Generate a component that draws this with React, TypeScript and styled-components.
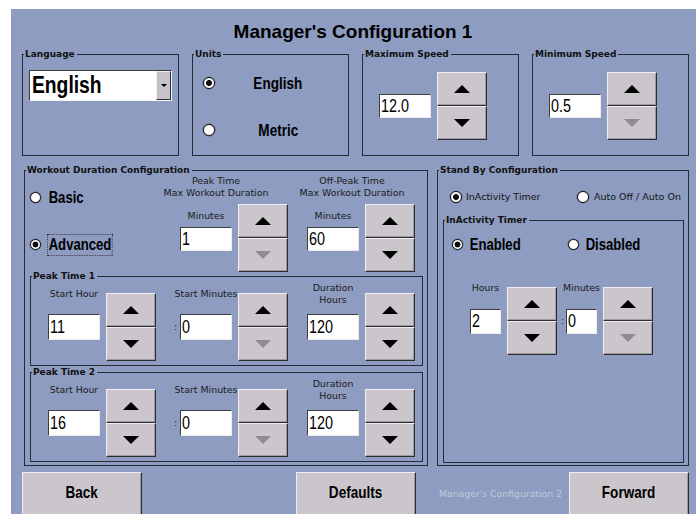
import React from "react";
import styled, { createGlobalStyle } from "styled-components";

const SANS = `"Liberation Sans", Arial, sans-serif`;
const SMALL = `"DejaVu Sans", Verdana, sans-serif`;

const GlobalStyle = createGlobalStyle`
  html, body {
    margin: 0;
    padding: 0;
    background: #fff;
    overflow: hidden;
  }
  * {
    box-sizing: border-box;
  }
`;

// the panel's big texts are a tall, narrow face: Arial squeezed sideways
const Narrow = styled.span<{ $origin?: string }>`
  display: inline-block;
  white-space: nowrap;
  transform: scaleX(0.82);
  transform-origin: ${(p) => p.$origin ?? "left"} center;
`;

const Screen = styled.div`
  width: 696px;
  height: 514px;
  padding: 9px 0 0 11px;
`;

const Panel = styled.main`
  height: 505px;
  background: #8d9cc0;
  padding: 0 7px 0 11px;
  display: flex;
  flex-direction: column;
  overflow: hidden;
  color: #000;
`;

const Title = styled.h1`
  margin: 0 0 5px;
  padding: 12px 5px 0 0;
  font: bold 19px/22px ${SANS};
  text-align: center;
`;

const TopRow = styled.div`
  flex: none;
  display: grid;
  grid-template-columns: repeat(4, 157px);
  column-gap: 13px;
  height: 108px;
`;

const MainRow = styled.div`
  flex: none;
  display: grid;
  grid-template-columns: 404px 252px;
  column-gap: 9px;
  height: 302px;
  margin-top: 8px;
  padding-left: 2px;
`;

const Box = styled.fieldset<{ $fill?: boolean }>`
  margin: 0;
  padding: 0;
  min-width: 0;
  border: 1px solid #252a35;
  display: flex;
  flex-direction: column;
  ${(p) => (p.$fill ? "flex: 1;" : "")}
`;

const Legend = styled.legend`
  margin-left: 1px;
  padding: 0 2px 0 1px;
  font: bold 9px/13px ${SMALL};
  white-space: nowrap;
  color: #111;
`;

/* language */
const LanguageBody = styled.div`
  padding: 9px 0 0 6px;
`;

const Select = styled.div`
  display: flex;
  width: 143px;
  height: 31px;
  background: #fff;
  border: 1px solid;
  border-color: #3a3a3a #f4f4f4 #f4f4f4 #3a3a3a;
`;

const SelectText = styled.span`
  flex: 1;
  padding-left: 2px;
  font: bold 23.5px/29px ${SANS};
`;

const DropButton = styled.span`
  width: 15px;
  display: flex;
  align-items: center;
  justify-content: center;
  background: #c6c2c7;
  border: 1px solid;
  border-color: #f0edf1 #2e2e2e #2e2e2e #f0edf1;
`;

const DropArrow = styled.span`
  width: 0;
  height: 0;
  border-left: 3px solid transparent;
  border-right: 3px solid transparent;
  border-top: 3px solid #000;
`;

/* radios */
const Radio = styled.span<{ $on?: boolean; $size: number }>`
  flex: none;
  display: inline-block;
  width: ${(p) => p.$size}px;
  height: ${(p) => p.$size}px;
  border-radius: 50%;
  border: 1px solid #111;
  background: ${(p) =>
    p.$on ? "radial-gradient(circle, #0a0a0a 2.6px, #fff 3.3px)" : "#fff"};
  box-shadow: 0 0 0 0.5px rgba(40, 40, 40, 0.5);
`;

const Option = styled.div<{ $gap: number }>`
  display: flex;
  align-items: center;
  gap: ${(p) => p.$gap}px;
  height: 21px;
  white-space: nowrap;
`;

const BigLabel = styled.span<{ $focus?: boolean }>`
  display: inline-block;
  height: 22px;
  padding: 0 1px;
  border: 1px dotted ${(p) => (p.$focus ? "#333" : "transparent")};
  font: bold 16px/20px ${SANS};
  transform: scaleX(0.82);
  transform-origin: left center;
`;

const SmallLabel = styled.span`
  font: 9.5px/12px ${SMALL};
  color: #151515;
`;

/* units */
const UnitsBody = styled.div`
  display: grid;
  grid-template-columns: 12px 1fr;
  grid-auto-rows: 24px;
  row-gap: 23px;
  align-items: center;
  padding: 10px 7px 0 10px;
`;

const UnitLabel = styled.span`
  text-align: center;
  font: bold 16.5px/24px ${SANS};
`;

/* spin controls */
const SpeedBody = styled.div`
  padding: 11px 0 0 16px;
`;

const SpinGroup = styled.div<{ $w: number }>`
  display: grid;
  grid-template-columns: ${(p) => p.$w}px 50px;
  grid-template-rows: 1fr auto 1fr;
  column-gap: 6px;
  height: 68px;
`;

const Caption = styled.div<{ $top: number }>`
  grid-column: 1;
  grid-row: 1;
  align-self: start;
  margin-top: ${(p) => p.$top}px;
  height: 22px;
  display: flex;
  align-items: center;
  justify-content: center;
  text-align: center;
  white-space: nowrap;
  font: 9.4px/12px ${SMALL};
  color: #1b1b1b;
`;

const Field = styled.div<{ $w: number; $h: number }>`
  grid-column: 1;
  grid-row: 2;
  width: ${(p) => p.$w}px;
  height: ${(p) => p.$h}px;
  background: #fff;
  border: 1px solid;
  border-color: #3e3e3e #ececec #ececec #3e3e3e;
  padding-left: 1px;
  font: 17.5px/${(p) => p.$h - 2}px ${SANS};
  overflow: hidden;
`;

const SpinStack = styled.div`
  grid-column: 2;
  grid-row: 1 / 4;
  display: grid;
  grid-template-rows: 1fr 1fr;
`;

const SpinButton = styled.div`
  display: flex;
  align-items: center;
  justify-content: center;
  background: #cac6cb;
  border: 1px solid;
  border-color: #f2eff3 #2c2c2c #2c2c2c #f2eff3;
  box-shadow: inset -1px -1px 0 #9d9aa0;
`;

const Arrow = styled.span<{ $dir: "up" | "down"; $off?: boolean }>`
  width: 0;
  height: 0;
  border-left: 8px solid transparent;
  border-right: 8px solid transparent;
  ${(p) =>
    p.$dir === "up"
      ? `border-bottom: 8px solid ${p.$off ? "#8e8c90" : "#000"};`
      : `border-top: 8px solid ${p.$off ? "#8e8c90" : "#000"};`}
`;

interface SpinProps {
  value: string;
  label?: React.ReactNode;
  w?: number;
  h?: number;
  top?: number;
  downOff?: boolean;
}

const Spin = ({ value, label, w = 52, h = 26, top = -10, downOff }: SpinProps) => (
  <SpinGroup $w={w}>
    {label && <Caption $top={top}>{label}</Caption>}
    <Field $w={w} $h={h}>
      <Narrow>{value}</Narrow>
    </Field>
    <SpinStack>
      <SpinButton>
        <Arrow $dir="up" />
      </SpinButton>
      <SpinButton>
        <Arrow $dir="down" $off={downOff} />
      </SpinButton>
    </SpinStack>
  </SpinGroup>
);

/* workout */
const WorkoutBody = styled.div`
  flex: 1;
  display: flex;
  flex-direction: column;
  padding: 0 4px 2px 5px;
`;

const TopArea = styled.div`
  flex: none;
  height: 93px;
  display: grid;
  grid-template-columns: 150px 108px 19px 108px;
  grid-template-rows: 22px 68px;
  row-gap: 5px;
`;

const ModeColumn = styled.div`
  grid-column: 1;
  grid-row: 1 / 3;
  display: flex;
  flex-direction: column;
  gap: 26px;
  padding-top: 10px;
`;

const Header = styled.div<{ $col: number; $shift: number }>`
  grid-column: ${(p) => p.$col};
  grid-row: 1;
  margin: -2px 0 0 ${(p) => p.$shift * 2}px;
  text-align: center;
  white-space: nowrap;
  font: 9.4px/12px ${SMALL};
  color: #1b1b1b;
`;

const Cell = styled.div<{ $col: number }>`
  grid-column: ${(p) => p.$col};
  grid-row: 2;
`;

const PeakBody = styled.div`
  display: grid;
  grid-template-columns: 108px 24px 108px 19px 108px;
  padding: 10px 0 4px 17px;
`;

const Colon = styled.span<{ $pad: number; $w?: number }>`
  display: flex;
  align-items: center;
  justify-content: flex-end;
  ${(p) => (p.$w ? `width: ${p.$w}px;` : "")}
  padding-right: ${(p) => p.$pad}px;
  font: 9px ${SMALL};
  color: #222;
`;

/* standby */
const StandbyBody = styled.div`
  flex: 1;
  display: flex;
  flex-direction: column;
  padding: 9px 4px 2px 5px;
`;

const ChoiceRow = styled.div<{ $col: number; $pad: number }>`
  display: grid;
  grid-template-columns: ${(p) => p.$col}px auto;
  padding-left: ${(p) => p.$pad}px;
  height: 20px;
  align-items: center;
`;

const InnerBox = styled(Box)`
  margin-top: 8px;
`;

const TimerBody = styled.div`
  padding: 7px 0 0 0;
`;

const TimerSpins = styled.div`
  display: flex;
  margin-top: 33px;
  padding-left: 26px;
`;

/* bottom bar */
const BottomBar = styled.div`
  flex: none;
  display: flex;
  align-items: flex-start;
  margin-top: 6px;
`;

const Button = styled.button<{ $push?: boolean }>`
  width: 120px;
  height: 44px;
  padding: 0 0 4px;
  margin-left: ${(p) => (p.$push ? "auto" : "0")};
  background: #cac6cb;
  border: 1px solid;
  border-color: #f2eff3 #2c2c2c #2c2c2c #f2eff3;
  box-shadow: inset -1px -1px 0 #9d9aa0;
  font: bold 16.5px ${SANS};
  color: #000;
`;

const NextLabel = styled.span`
  width: 123px;
  margin: 0 7px 0 23px;
  padding-top: 16px;
  text-align: center;
  white-space: nowrap;
  font: 9.3px ${SMALL};
  color: #c3c9dc;
`;

export default function App() {
  return (
    <>
      <GlobalStyle />
      <Screen>
        <Panel>
          <Title>Manager's Configuration 1</Title>

          <TopRow>
            <Box>
              <Legend>Language</Legend>
              <LanguageBody>
                <Select>
                  <SelectText>
                    <Narrow>English</Narrow>
                  </SelectText>
                  <DropButton>
                    <DropArrow />
                  </DropButton>
                </Select>
              </LanguageBody>
            </Box>

            <Box>
              <Legend>Units</Legend>
              <UnitsBody>
                <Radio $size={12} $on />
                <UnitLabel>
                  <Narrow $origin="center">English</Narrow>
                </UnitLabel>
                <Radio $size={12} />
                <UnitLabel>
                  <Narrow $origin="center">Metric</Narrow>
                </UnitLabel>
              </UnitsBody>
            </Box>

            <Box>
              <Legend>Maximum Speed</Legend>
              <SpeedBody>
                <Spin value="12.0" h={24} />
              </SpeedBody>
            </Box>

            <Box>
              <Legend>Minimum Speed</Legend>
              <SpeedBody>
                <Spin value="0.5" h={24} downOff />
              </SpeedBody>
            </Box>
          </TopRow>

          <MainRow>
            <Box>
              <Legend>Workout Duration Configuration</Legend>
              <WorkoutBody>
                <TopArea>
                  <ModeColumn>
                    <Option $gap={6}>
                      <Radio $size={11} />
                      <BigLabel>Basic</BigLabel>
                    </Option>
                    <Option $gap={6}>
                      <Radio $size={11} $on />
                      <BigLabel $focus>Advanced</BigLabel>
                    </Option>
                  </ModeColumn>
                  <Header $col={2} $shift={-18}>
                    Peak Time
                    <br />
                    Max Workout Duration
                  </Header>
                  <Header $col={4} $shift={-9}>
                    Off-Peak Time
                    <br />
                    Max Workout Duration
                  </Header>
                  <Cell $col={2}>
                    <Spin value="1" label="Minutes" h={24} top={1} downOff />
                  </Cell>
                  <Cell $col={4}>
                    <Spin value="60" label="Minutes" h={24} top={1} />
                  </Cell>
                </TopArea>

                {[
                  { name: "Peak Time 1", hour: "11" },
                  { name: "Peak Time 2", hour: "16" },
                ].map((peak) => (
                  <Box key={peak.name}>
                    <Legend>{peak.name}</Legend>
                    <PeakBody>
                      <Spin value={peak.hour} label="Start Hour" />
                      <Colon $pad={3}>:</Colon>
                      <Spin value="0" label="Start Minutes" downOff />
                      <span />
                      <Spin
                        value="120"
                        label={
                          <>
                            Duration
                            <br />
                            Hours
                          </>
                        }
                      />
                    </PeakBody>
                  </Box>
                ))}
              </WorkoutBody>
            </Box>

            <Box>
              <Legend>Stand By Configuration</Legend>
              <StandbyBody>
                <ChoiceRow $col={127} $pad={7}>
                  <Option $gap={4}>
                    <Radio $size={12} $on />
                    <SmallLabel>InActivity Timer</SmallLabel>
                  </Option>
                  <Option $gap={5}>
                    <Radio $size={12} />
                    <SmallLabel>Auto Off / Auto On</SmallLabel>
                  </Option>
                </ChoiceRow>

                <InnerBox $fill>
                  <Legend>InActivity Timer</Legend>
                  <TimerBody>
                    <ChoiceRow $col={116} $pad={8}>
                      <Option $gap={5}>
                        <Radio $size={11} $on />
                        <BigLabel>Enabled</BigLabel>
                      </Option>
                      <Option $gap={5}>
                        <Radio $size={11} />
                        <BigLabel>Disabled</BigLabel>
                      </Option>
                    </ChoiceRow>
                    <TimerSpins>
                      <Spin value="2" label="Hours" w={31} h={25} />
                      <Colon $pad={2} $w={9}>
                        :
                      </Colon>
                      <Spin value="0" label="Minutes" w={31} h={25} downOff />
                    </TimerSpins>
                  </TimerBody>
                </InnerBox>
              </StandbyBody>
            </Box>
          </MainRow>

          <BottomBar>
            <Button>
              <Narrow $origin="center">Back</Narrow>
            </Button>
            <Button $push>
              <Narrow $origin="center">Defaults</Narrow>
            </Button>
            <NextLabel>Manager's Configuration 2</NextLabel>
            <Button>
              <Narrow $origin="center">Forward</Narrow>
            </Button>
          </BottomBar>
        </Panel>
      </Screen>
    </>
  );
}
